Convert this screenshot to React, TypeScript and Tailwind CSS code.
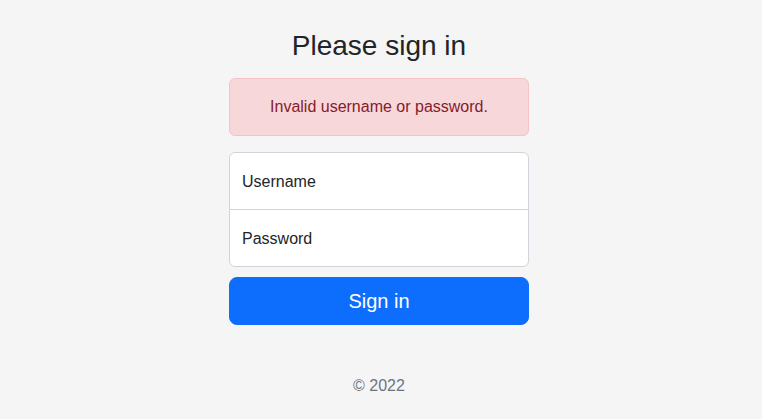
import { useState } from "react";

export default function App() {
  const [username, setUsername] = useState("");
  const [password, setPassword] = useState("");

  return (
    <div className="min-h-screen bg-[#f5f5f5] pr-1 font-['Liberation_Sans',Arial,sans-serif] text-[#212529]">
      <main className="mx-auto flex w-[300px] flex-col pt-[29px] text-center">
        <h1 className="mb-[15px] text-[28px] font-normal leading-[1.2]">Please sign in</h1>

        <div className="mb-4 rounded-md border border-[#f5c2c7] bg-[#f8d7da] p-4 text-base leading-6 text-[#842029]">
          Invalid username or password.
        </div>

        <form
          className="flex flex-col"
          onSubmit={(e) => {
            e.preventDefault();
          }}
        >
          <input
            type="text"
            value={username}
            onChange={(e) => setUsername(e.target.value)}
            placeholder="Username"
            className="relative -mb-px h-[58px] rounded-t-md border border-[#ced4da] bg-white px-3 pt-0.5 text-base text-[#212529] outline-none placeholder:text-[#212529] focus:z-10"
          />
          <input
            type="password"
            value={password}
            onChange={(e) => setPassword(e.target.value)}
            placeholder="Password"
            className="relative h-[58px] rounded-b-md border border-[#ced4da] bg-white px-3 pt-0.5 text-base text-[#212529] outline-none placeholder:text-[#212529] focus:z-10"
          />
          <button
            type="submit"
            className="mt-[10px] h-12 rounded-lg border border-[#0d6efd] bg-[#0d6efd] text-xl text-white"
          >
            Sign in
          </button>
        </form>

        <p className="mt-[49px] mb-4 leading-6 text-[#6c757d]">© 2022</p>
      </main>
    </div>
  );
}
